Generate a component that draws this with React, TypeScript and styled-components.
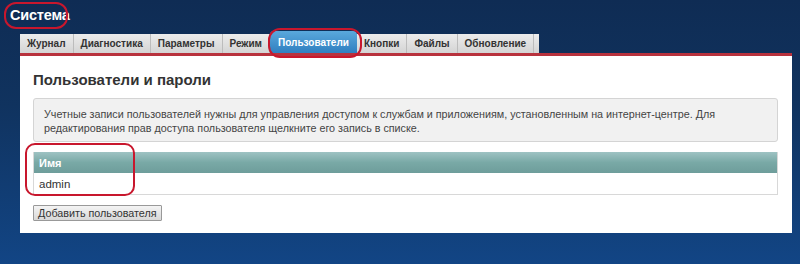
import React from "react";
import styled, { createGlobalStyle } from "styled-components";

const Global = createGlobalStyle`
  html, body { margin: 0; padding: 0; }
  body {
    width: 800px; height: 264px; overflow: hidden;
    font-family: "Liberation Sans", Arial, sans-serif;
    background: linear-gradient(180deg, #0f2c54 0%, #10335f 40%, #124585 100%);
  }
`;

const Page = styled.div`
  position: relative;
  width: 800px;
  height: 264px;
  padding: 4px 8px 0 20px;
  box-sizing: border-box;
  display: flex;
  flex-direction: column;
`;

const Heading = styled.div`
  margin-left: -10px;
  height: 22px;
  display: flex;
  align-items: center;
  color: #fff;
  font-weight: bold;
  font-size: 14.5px;
  letter-spacing: -0.2px;
`;

const TabBar = styled.div`
  margin-top: 8px;
  display: flex;
  align-items: flex-end;
  height: 19px;
  width: 519px;
  background: linear-gradient(180deg, #ececec 0%, #d4d4d4 100%);
`;

const Tab = styled.div<{ $active?: boolean }>`
  height: ${(p) => (p.$active ? "22px" : "19px")};
  display: flex;
  align-items: center;
  padding: 0 ${(p) => (p.$active ? "8px" : "7px")};
  font-size: 10px;
  font-weight: bold;
  color: ${(p) => (p.$active ? "#fff" : "#333")};
  border-right: ${(p) => (p.$active ? "none" : "1px solid #bcbcbc")};
  border-radius: ${(p) => (p.$active ? "4px 4px 0 0" : "0")};
  background: ${(p) =>
    p.$active ? "linear-gradient(180deg, #5aa8dc 0%, #2f7fc0 100%)" : "transparent"};
  box-sizing: border-box;
`;

const RedLine = styled.div`
  height: 3px;
  background: #b8323d;
  width: 772px;
`;

const Panel = styled.div`
  width: 772px;
  height: 177px;
  background: #fff;
  box-sizing: border-box;
  padding: 14px 14px 0 13px;
  display: flex;
  flex-direction: column;
`;

const Title = styled.h1`
  margin: 0;
  font-size: 15px;
  font-weight: bold;
  color: #333;
  line-height: 20px;
`;

const Info = styled.div`
  margin-top: 8px;
  height: 44px;
  box-sizing: border-box;
  border: 1px solid #d4d4d4;
  border-radius: 3px;
  background: #f1f1f1;
  padding: 8px 10px 0 10px;
  font-size: 10.75px;
  line-height: 14px;
  color: #444;
`;

const Table = styled.div`
  margin-top: 10px;
  border: 1px solid #d8d8d8;
  border-top: none;
`;

const HeaderRow = styled.div`
  height: 21px;
  display: flex;
  align-items: center;
  padding-left: 5px;
  color: #fff;
  font-weight: bold;
  font-size: 11px;
  background: linear-gradient(180deg, #9ec3c3 0%, #79a9a6 50%, #6e9d9b 100%);
`;

const Row = styled.div`
  height: 21px;
  display: flex;
  align-items: center;
  padding-left: 5px;
  font-size: 11.5px;
  color: #333;
`;

const Button = styled.button`
  margin-top: 10px;
  align-self: flex-start;
  height: 16px;
  padding: 0 4px;
  font-family: "Liberation Sans", Arial, sans-serif;
  font-size: 10.75px;
  color: #333;
  border: 1px solid #999;
  background: linear-gradient(180deg, #f4f4f4 0%, #d8d8d8 100%);
  border-radius: 1px;
  line-height: 14px;
`;

const Mark = styled.div<{ $x: number; $y: number; $w: number; $h: number; $r: number }>`
  position: absolute;
  left: ${(p) => p.$x}px;
  top: ${(p) => p.$y}px;
  width: ${(p) => p.$w}px;
  height: ${(p) => p.$h}px;
  border: 2.5px solid #c8172d;
  border-radius: ${(p) => p.$r}px;
  box-sizing: border-box;
  pointer-events: none;
`;

const tabs = ["Журнал", "Диагностика", "Параметры", "Режим", "Пользователи", "Кнопки", "Файлы", "Обновление"];

export default function App() {
  return (
    <>
      <Global />
      <Page>
        <Heading>Система</Heading>
        <TabBar>
          {tabs.map((t) => (
            <Tab key={t} $active={t === "Пользователи"}>
              {t}
            </Tab>
          ))}
        </TabBar>
        <RedLine />
        <Panel>
          <Title>Пользователи и пароли</Title>
          <Info>
            Учетные записи пользователей нужны для управления доступом к службам и приложениям, установленным на интернет-центре. Для
            <br />
            редактирования прав доступа пользователя щелкните его запись в списке.
          </Info>
          <Table>
            <HeaderRow>Имя</HeaderRow>
            <Row>admin</Row>
          </Table>
          <Button>Добавить пользователя</Button>
        </Panel>
        <Mark $x={4} $y={2} $w={64} $h={27} $r={12} />
        <Mark $x={268} $y={28} $w={94} $h={30} $r={12} />
        <Mark $x={25} $y={143} $w={110} $h={53} $r={10} />
      </Page>
    </>
  );
}
